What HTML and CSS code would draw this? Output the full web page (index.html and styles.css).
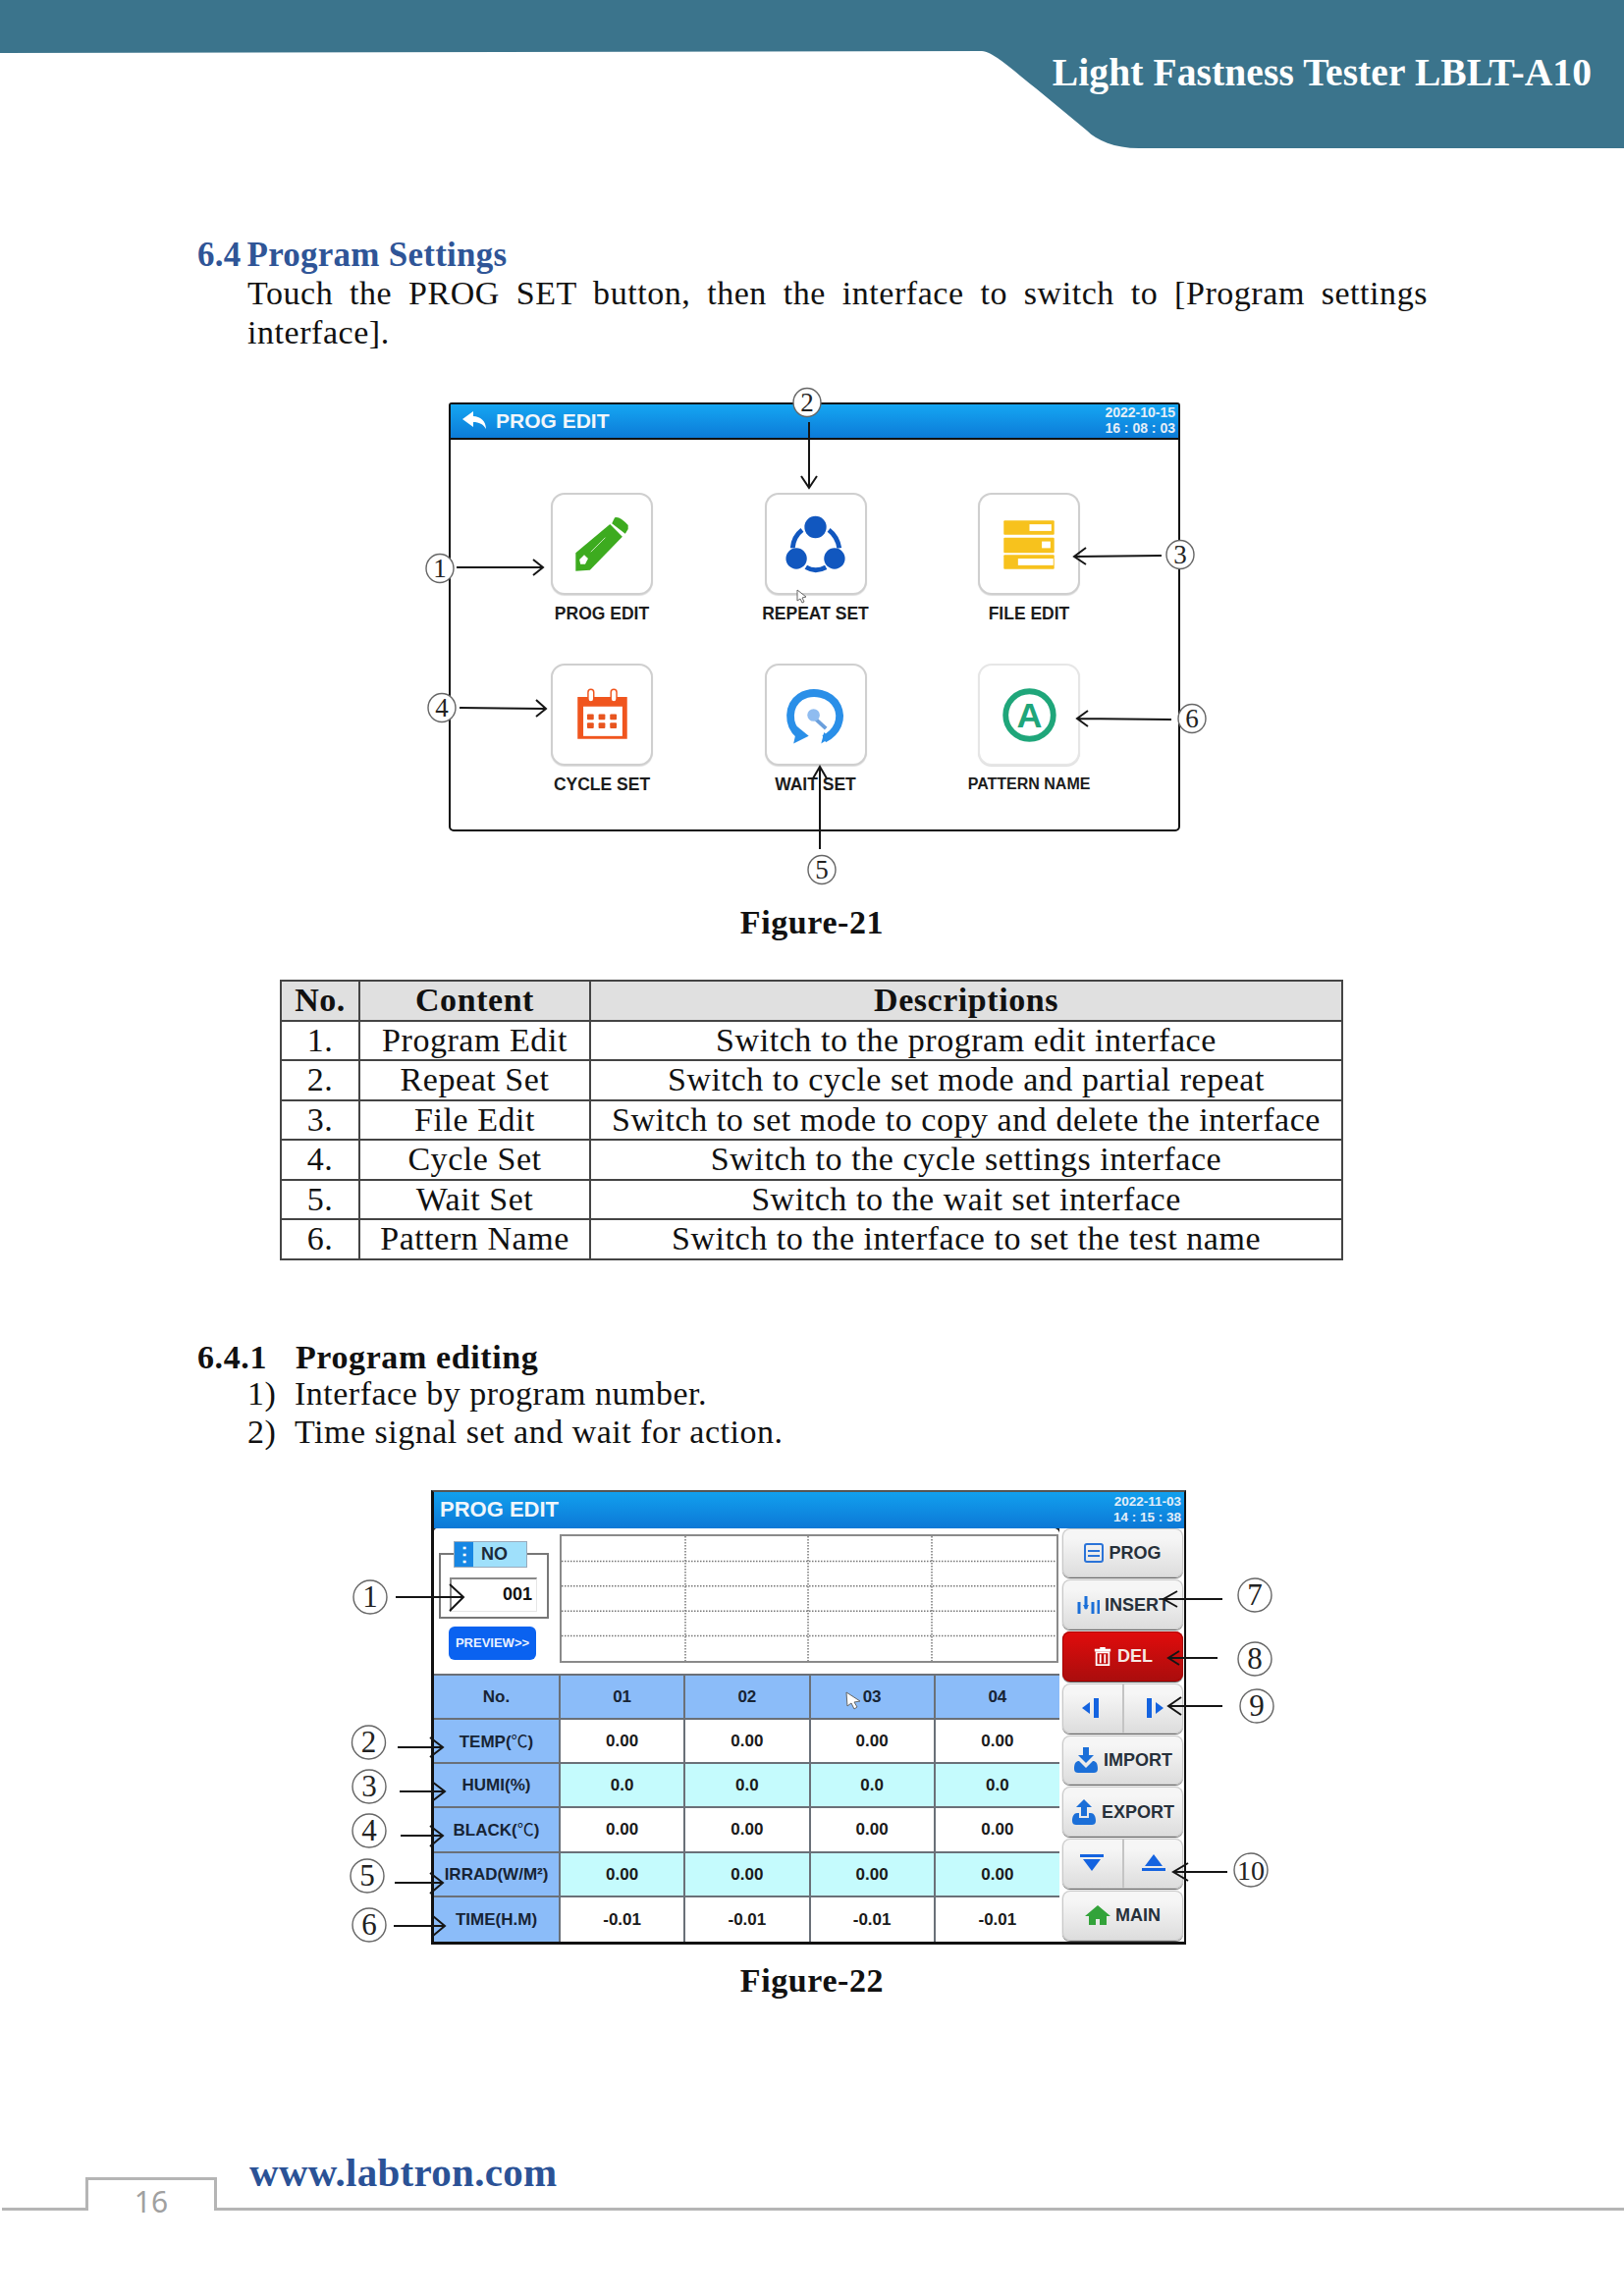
FILE: index.html
```html
<!DOCTYPE html>
<html lang="en">
<head>
<meta charset="utf-8">
<title>Light Fastness Tester LBLT-A10</title>
<link rel="stylesheet" href="styles.css">
</head>
<body>
<div class="page">
  <header class="banner">
    <svg class="banner-shape" viewBox="0 0 1654 152" preserveAspectRatio="none"><path d="M0 0H1654V151H1160C1135 151 1117 143 1107 133L1055 90C1030 70 1012 53 1000 52L0 54Z" fill="#3b748c"/></svg>
    <div class="banner-title">Light Fastness Tester LBLT-A10</div>
  </header>

  <main class="content">
    <h2 class="h-blue"><span class="num">6.4</span>Program Settings</h2>
    <p class="para">Touch the PROG SET button, then the interface to switch to [Program settings interface].</p>

    <figure class="fig fig-one">
      <div class="screen-a">
        <div class="bar-a">
          <svg class="back" viewBox="0 0 24 18"><path d="M0 8 11 0V5C18 5 24 10 24 18 21 13 17 11 11 11V16Z" fill="#fff"/></svg>
          <span class="bar-a-title">PROG EDIT</span>
          <span class="stamp stamp-a">2022-10-15<br>16 : 08 : 03</span>
        </div>
        <div class="tiles">
          <div class="tile-item">
            <div class="tile"><svg viewBox="0 0 103 103"><path d="M24 61 60 31 73 44 39 79 24 80Z" fill="#3dab1f"/><path d="M62 30 65 24Q70 22 79 32L79 36 76 41Z" fill="#3dab1f"/><path d="M28 68 33 63 37 67 34 73 29 73Z" fill="#fff"/><path d="M40 60 55 45" stroke="#cfe9c4" stroke-width="1" fill="none"/></svg></div>
            <div class="tile-label">PROG EDIT</div>
          </div>
          <div class="tile-item">
            <div class="tile"><svg viewBox="0 0 103 103"><g fill="#1157bf"><circle cx="51" cy="34" r="11.5"/><circle cx="31" cy="67" r="11"/><circle cx="71" cy="67" r="11"/></g><g fill="none" stroke="#1157bf" stroke-width="5"><path d="M37 37Q28 44 27 56"/><path d="M65 37Q74 44 76 56"/><path d="M41 76Q51 82 62 76"/></g></svg></div>
            <div class="tile-label">REPEAT SET</div>
          </div>
          <div class="tile-item">
            <div class="tile"><svg viewBox="0 0 103 103"><g fill="#f7c21d"><rect x="25" y="27" width="53" height="15" rx="1"/><rect x="25" y="45" width="53" height="16" rx="1"/><rect x="25" y="63" width="53" height="15" rx="1"/></g><g fill="#fff"><rect x="52" y="31" width="23" height="7"/><rect x="65" y="49" width="9" height="7"/><rect x="40" y="67" width="37" height="7"/></g></svg></div>
            <div class="tile-label">FILE EDIT</div>
          </div>
          <div class="tile-item">
            <div class="tile"><svg viewBox="0 0 103 103"><path d="M26 33H78V77H26Z" fill="#f0551e"/><rect x="32" y="43" width="41" height="31" fill="#fff"/><g fill="#e8551f"><rect x="36" y="51" width="7" height="6" rx="1"/><rect x="48" y="51" width="7" height="6" rx="1"/><rect x="60" y="51" width="7" height="6" rx="1"/><rect x="36" y="60" width="7" height="6" rx="1"/><rect x="48" y="60" width="7" height="6" rx="1"/><rect x="60" y="60" width="7" height="6" rx="1"/></g><g fill="#fff" stroke="#f0551e" stroke-width="1.5"><rect x="37" y="25" width="6" height="13" rx="3"/><rect x="61" y="25" width="6" height="13" rx="3"/></g></svg></div>
            <div class="tile-label">CYCLE SET</div>
          </div>
          <div class="tile-item">
            <div class="tile"><svg viewBox="0 0 103 103"><path d="M34 73C21 62 22 42 35 33 48 25 67 29 74 43 80 56 74 70 60 77" fill="none" stroke="#2a8fe8" stroke-width="8"/><path d="M28 82 32 64 44 74Z" fill="#2a8fe8"/><path d="M57 82 60 70 66 76Z" fill="#2a8fe8"/><path d="M51 56 62 66" stroke="#6a9fdc" stroke-width="4"/><circle cx="49" cy="52" r="6.5" fill="#8fbcf0"/></svg></div>
            <div class="tile-label">WAIT SET</div>
          </div>
          <div class="tile-item">
            <div class="tile tile-soft"><svg viewBox="0 0 103 103"><circle cx="52" cy="52" r="25" fill="none" stroke="#1fa67a" stroke-width="6"/><text x="52" y="65" class="tile-a">A</text></svg></div>
            <div class="tile-label tile-label-sm">PATTERN NAME</div>
          </div>
        </div>
      </div>
      <svg class="marks" viewBox="0 390 1654 520">
        <g class="leader">
          <path d="M465 578H553M543 570 553 578 543 586"/>
          <path d="M824 430V497M816 485 824 497 832 485"/>
          <path d="M1183 566 1094 567M1106 558 1094 567 1106 575"/>
          <path d="M468 721 556 722M546 713 556 722 546 730"/>
          <path d="M835 865V781M828 793 835 781 842 793"/>
          <path d="M1193 733 1097 732M1108 724 1097 732 1108 740"/>
        </g>
        <g class="ring"><ellipse cx="448" cy="579" rx="14" ry="14.500"/><ellipse cx="822" cy="410" rx="14" ry="14.500"/><ellipse cx="1202" cy="565" rx="14" ry="14.500"/><ellipse cx="450" cy="721" rx="14" ry="14.500"/><ellipse cx="837" cy="886" rx="14" ry="14.500"/><ellipse cx="1214" cy="732" rx="14" ry="14.500"/></g>
        <g class="ring-num"><text x="448" y="588">1</text><text x="822" y="419">2</text><text x="1202" y="574">3</text><text x="450" y="730">4</text><text x="837" y="895">5</text><text x="1214" y="741">6</text></g>
        <path class="pointer" d="M812 601 821 608 817 609 819 613 817 614 815 610 812 612Z"/>
      </svg>
    </figure>
    <figcaption class="caption">Figure-21</figcaption>

    <table class="desc">
      <thead><tr><th class="col-no">No.</th><th class="col-content">Content</th><th>Descriptions</th></tr></thead>
      <tbody>
        <tr><td>1.</td><td>Program Edit</td><td>Switch to the program edit interface</td></tr>
        <tr><td>2.</td><td>Repeat Set</td><td>Switch to cycle set mode and partial repeat</td></tr>
        <tr><td>3.</td><td>File Edit</td><td>Switch to set mode to copy and delete the interface</td></tr>
        <tr><td>4.</td><td>Cycle Set</td><td>Switch to the cycle settings interface</td></tr>
        <tr><td>5.</td><td>Wait Set</td><td>Switch to the wait set interface</td></tr>
        <tr><td>6.</td><td>Pattern Name</td><td>Switch to the interface to set the test name</td></tr>
      </tbody>
    </table>

    <h3 class="h-black"><span class="num-wide">6.4.1</span>Program editing</h3>
    <ol class="steps">
      <li><span class="step-n">1)</span>Interface by program number.</li>
      <li><span class="step-n">2)</span>Time signal set and wait for action.</li>
    </ol>

    <figure class="fig fig-two">
      <div class="screen-b">
        <div class="bar-b">
          <span class="bar-b-title">PROG EDIT</span>
          <span class="stamp stamp-b">2022-11-03<br>14 : 15 : 38</span>
        </div>
        <div class="panel">
          <div class="panel-left">
            <div class="panel-top">
              <div class="no-col">
                <div class="no-group">
                  <div class="no-tag"><span class="no-dots">⋮</span><span class="no-text">NO</span></div>
                  <div class="no-input">001</div>
                </div>
                <div class="preview">PREVIEW&gt;&gt;</div>
              </div>
              <svg class="chart" viewBox="0 0 508 130" preserveAspectRatio="none"><g class="chart-grid"><path d="M127 0V130M253 0V130M380 0V130M0 26H508M0 52H508M0 78H508M0 104H508"/></g></svg>
            </div>
            <table class="data">
              <thead><tr><th class="data-head">No.</th><th>01</th><th>02</th><th>03</th><th>04</th></tr></thead>
              <tbody>
                <tr><th>TEMP(<span class="cjk">℃</span>)</th><td>0.00</td><td>0.00</td><td>0.00</td><td>0.00</td></tr>
                <tr class="alt"><th>HUMI(%)</th><td>0.0</td><td>0.0</td><td>0.0</td><td>0.0</td></tr>
                <tr><th>BLACK(<span class="cjk">℃</span>)</th><td>0.00</td><td>0.00</td><td>0.00</td><td>0.00</td></tr>
                <tr class="alt"><th>IRRAD(W/M²)</th><td>0.00</td><td>0.00</td><td>0.00</td><td>0.00</td></tr>
                <tr><th>TIME(H.M)</th><td>-0.01</td><td>-0.01</td><td>-0.01</td><td>-0.01</td></tr>
              </tbody>
            </table>
          </div>
          <div class="side">
            <div class="btn"><svg class="ico" viewBox="0 0 20 20"><rect x="1" y="1" width="18" height="18" rx="2" fill="none" stroke="#2a73d8" stroke-width="2"/><path d="M4 8H16M4 13H16" stroke="#2a73d8" stroke-width="2"/></svg>PROG</div>
            <div class="btn"><svg class="ico ico-w" viewBox="0 0 24 20"><path d="M3 7V19M10 1V14M17 7V19M23 5V19" stroke="#1b6fd8" stroke-width="3"/><path d="M7 10 10 15 13 10Z" fill="#1b6fd8"/></svg>INSERT</div>
            <div class="btn btn-del"><svg class="ico" viewBox="0 0 20 22"><path d="M7 1H13V3H19V6H1V3H7Z" fill="#fff"/><path d="M3 7H17V21H3Z" fill="none" stroke="#fff" stroke-width="2"/><path d="M7.500 9V19M12.500 9V19" stroke="#fff" stroke-width="2"/></svg>DEL</div>
            <div class="btn btn-pair"><span class="half half-left"><svg class="ico" viewBox="0 0 20 20"><path d="M0 10 8 4V16Z" fill="#1463e0"/><rect x="12" y="0" width="5" height="20" fill="#1463e0"/></svg></span><span class="half"><svg class="ico" viewBox="0 0 20 20"><rect x="3" y="0" width="5" height="20" fill="#1463e0"/><path d="M20 10 12 4V16Z" fill="#1463e0"/></svg></span></div>
            <div class="btn"><svg class="ico ico-l" viewBox="0 0 26 26"><path d="M10 0H16V8H21L13 16 5 8H10Z" fill="#1b6fd8"/><path d="M1 22C1 16 3 14 6 14L13 21 20 14C23 14 25 16 25 22 25 25 23 26 21 26H5C3 26 1 25 1 22Z" fill="#1b6fd8"/></svg>IMPORT</div>
            <div class="btn"><svg class="ico ico-l" viewBox="0 0 26 26"><path d="M13 0 21 8H16V17H10V8H5Z" fill="#1b6fd8"/><path d="M1 22C1 17 3 14 6 14H8V19H18V14H20C23 14 25 17 25 22 25 25 23 26 21 26H5C3 26 1 25 1 22Z" fill="#1b6fd8"/></svg>EXPORT</div>
            <div class="btn btn-pair"><span class="half half-left"><svg class="ico ico-w" viewBox="0 0 24 18"><rect x="0" y="0" width="24" height="3" fill="#1463e0"/><path d="M3 5H21L12 17Z" fill="#1463e0"/></svg></span><span class="half"><svg class="ico ico-w" viewBox="0 0 24 18"><path d="M12 0 21 12H3Z" fill="#1463e0"/><rect x="0" y="14" width="24" height="3" fill="#1463e0"/></svg></span></div>
            <div class="btn"><svg class="ico ico-l" viewBox="0 0 26 20"><path d="M13 0 26 11H22V20H15V14H11V20H4V11H0Z" fill="#33a33a"/></svg>MAIN</div>
          </div>
        </div>
      </div>
      <svg class="marks" viewBox="0 1500 1654 500">
        <g class="leader">
          <path d="M403 1627H471M458 1614 472 1627 458 1641"/>
          <path d="M405 1780H451M438 1770 451 1780 438 1790"/>
          <path d="M407 1825H453M440 1815 453 1825 440 1835"/>
          <path d="M408 1870H451M438 1860 451 1870 438 1881"/>
          <path d="M402 1918H451M438 1908 451 1918 438 1929"/>
          <path d="M401 1962H453M441 1952 453 1962 441 1972"/>
          <path d="M1245 1629H1185M1199 1621 1185 1629 1199 1637"/>
          <path d="M1240 1689H1190M1201 1682 1190 1689 1201 1696"/>
          <path d="M1245 1738H1190M1203 1729 1190 1738 1203 1747"/>
          <path d="M1250 1907H1195M1210 1898 1195 1907 1210 1916"/>
        </g>
        <g class="ring"><circle cx="377" cy="1627" r="17"/><circle cx="375.500" cy="1775" r="17"/><circle cx="376" cy="1820" r="17"/><circle cx="376" cy="1865" r="17"/><circle cx="374" cy="1911" r="17"/><circle cx="376" cy="1961" r="17"/><circle cx="1278" cy="1625" r="17"/><circle cx="1278" cy="1690" r="17"/><circle cx="1280" cy="1738" r="17"/><circle cx="1274" cy="1905" r="17"/></g>
        <g class="ring-num ring-num-lg"><text x="377" y="1637">1</text><text x="375.500" y="1785">2</text><text x="376" y="1830">3</text><text x="376" y="1875">4</text><text x="374" y="1921">5</text><text x="376" y="1971">6</text><text x="1278" y="1635">7</text><text x="1278" y="1700">8</text><text x="1280" y="1748">9</text><text x="1274" y="1915" class="ring-ten">10</text></g>
        <path class="pointer" d="M862 1724 876 1733 870 1734 873 1739 870 1741 867 1735 863 1738Z"/>
      </svg>
    </figure>
    <figcaption class="caption caption-two">Figure-22</figcaption>
  </main>

  <footer class="foot">
    <div class="foot-rule foot-rule-start"></div>
    <div class="foot-tab">16</div>
    <div class="foot-rule foot-rule-end"><a class="foot-link">www.labtron.com</a></div>
  </footer>
</div>
</body>
</html>
```

FILE: styles.css
```css
* { box-sizing: border-box; }
html, body { margin: 0; padding: 0; background: #fff; }
body { font-family: "Liberation Serif", "Noto Sans CJK SC", serif; color: #111; }
.page { position: relative; width: 1654px; height: 2339px; overflow: hidden; display: flex; flex-direction: column; }

/* banner */
.banner { position: relative; height: 151px; flex: none; display: flex; justify-content: flex-end; }
.banner-shape { position: absolute; inset: 0; width: 100%; height: 152px; }
.banner-title { position: relative; margin: 50px 33px 0 0; font-size: 39.500px; line-height: 48px; font-weight: 700; color: #fff; letter-spacing: .1px; }

/* text */
.content { flex: none; height: 2067px; display: flex; flex-direction: column; }
.h-blue { margin: 89px 200px 0 201px; height: 39px; font-size: 35px; line-height: 40px; font-weight: 700; color: #2f5597; letter-spacing: .25px; }
.num { margin-right: 6px; }
.para { margin: 0 200px 0 252px; font-size: 34px; line-height: 40px; text-align: justify; letter-spacing: .55px; }
.fig { position: relative; margin: 0; }
.fig-one { margin-top: 51px; height: 437px; }
.marks { position: absolute; left: 0; width: 1654px; overflow: visible; pointer-events: none; }
.fig-one .marks { top: -20px; height: 520px; }
.fig-two .marks { top: -18px; height: 500px; }
.leader path { fill: none; stroke: #151515; stroke-width: 2; }
.ring ellipse, .ring circle { fill: #fff; stroke: #666; stroke-width: 1.400; }
.ring-num text { font-family: "Liberation Serif", serif; font-size: 27px; text-anchor: middle; fill: #222; }
.ring-num-lg text { font-size: 31px; }
.ring-num-lg .ring-ten { font-size: 28px; }
.pointer { fill: #fff; stroke: #666; stroke-width: 1; }
.caption { margin: 73px 0 0; height: 40px; text-align: center; font-size: 34px; line-height: 40px; font-weight: 700; letter-spacing: .6px; }
.caption-two { margin-top: 17px; }

/* figure 21 */
.screen-a { margin-left: 457px; width: 745px; height: 437px; border: 2px solid #111; border-radius: 3px 3px 5px 5px; background: #fff; }
.bar-a { position: relative; height: 36px; display: flex; align-items: center; padding: 0 0 2px 12px; border-bottom: 2px solid #111; background: linear-gradient(#15a6f2, #0c7bd8); color: #fff; }
.back { width: 24px; height: 18px; }
.bar-a-title { margin-left: 10px; font: 700 21px/1 "Liberation Sans", sans-serif; color: #f2f6fa; }
.stamp { margin-left: auto; margin-right: 3px; text-align: right; font-family: "Liberation Sans", sans-serif; font-weight: 700; color: #e4eef8; }
.stamp-a { font-size: 14px; line-height: 16px; }
.stamp-b { font-size: 13.500px; line-height: 16px; }
.tiles { display: grid; grid-template-columns: repeat(3, 104px); column-gap: 113.500px; grid-auto-rows: 174px; padding: 54px 0 0 102px; }
.tile-item { display: flex; flex-direction: column; align-items: center; }
.tile { width: 104px; height: 104px; border: 2px solid #cfcfcf; border-radius: 14px; background: #fff; box-shadow: 0 1px 1px #ddd; }
.tile-soft { border-color: #e6e6e6; }
.tile svg { display: block; width: 100px; height: 100px; }
.tile-a { font: 700 37px "Liberation Sans", sans-serif; fill: #1fa67a; text-anchor: middle; }
.tile-label { margin-top: 9px; font: 700 17.500px/20px "Liberation Sans", sans-serif; color: #1c1c1c; white-space: nowrap; }
.tile-label-sm { font-size: 16px; }

/* description table */
.desc { margin: 38px 0 0 285px; width: 1083px; height: 284px; border-collapse: collapse; table-layout: fixed; font-size: 34px; letter-spacing: .55px; }
.desc th, .desc td { border: 2px solid #444; padding: 0; height: 40.500px; line-height: 36px; text-align: center; font-weight: 400; }
.desc th { background: #e0e0e0; font-weight: 700; }
.col-no { width: 80px; }
.col-content { width: 235px; }

.h-black { margin: 79px 0 0 201px; height: 39px; font-size: 34px; line-height: 40px; font-weight: 700; display: flex; letter-spacing: .6px; }
.num-wide { width: 100px; }
.steps { margin: -2px 0 0 252px; padding: 0; list-style: none; font-size: 34px; line-height: 39px; letter-spacing: .5px; }
.steps li { display: flex; }
.step-n { width: 48px; }

/* figure 22 */
.fig-two { margin-top: 40px; height: 463px; }
.screen-b { margin-left: 439px; width: 769px; height: 463px; display: flex; flex-direction: column; border-left: 3px solid #111; border-bottom: 3px solid #111; border-right: 2px solid #111; border-top: 2px solid #555; background: #111; }
.bar-b { height: 37px; display: flex; align-items: center; padding-left: 6px; background: linear-gradient(#12a0ee, #0c78d6); color: #fff; }
.bar-b-title { font: 700 22px/1 "Liberation Sans", sans-serif; color: #f0f6fb; }
.panel { flex: 1; display: flex; min-height: 0; background: #222; }
.panel-left { width: 637px; display: flex; flex-direction: column; background: #fff; border-radius: 4px 6px 0 0; }
.panel-top { height: 148px; display: flex; background: #fff; border-radius: 4px 6px 0 0; }
.no-col { width: 128px; flex: none; padding: 25px 0 0 5px; }
.no-group { position: relative; width: 112px; height: 67px; border: 2px solid #777; background: #fff; }
.no-tag { position: absolute; left: 13px; top: -14px; width: 75px; height: 27px; display: flex; border: 1px solid #9ab; background: #9fe0fb; }
.no-dots { width: 19px; background: #1787e4; color: #fff; font: 700 20px/25px "Liberation Sans", sans-serif; text-align: center; }
.no-text { flex: 1; padding-left: 8px; font: 700 18px/25px "Liberation Sans", sans-serif; color: #1b2a3a; }
.no-input { position: absolute; left: 9px; top: 23px; width: 89px; height: 35px; padding-right: 4px; border-top: 2px solid #888; border-left: 2px solid #888; border-right: 1px solid #e6e6e6; border-bottom: 1px solid #e6e6e6; text-align: right; font: 700 18px/30px "Liberation Sans", sans-serif; color: #111; }
.preview { margin: 8px 0 0 10px; width: 89px; height: 34px; border-radius: 6px; background: #0a62f0; color: #e8f0ff; text-align: center; font: 700 13px/33px "Liberation Sans", sans-serif; }
.chart { flex: none; width: 508px; height: 131px; margin-top: 6px; border: 2px solid #8a8a8a; background: #fff; }
.chart-grid path { fill: none; stroke: #777; stroke-width: 1.500; stroke-dasharray: 1.500 1.500; vector-effect: non-scaling-stroke; }

.data { flex: 1; width: 637px; border-collapse: collapse; table-layout: fixed; font: 700 17px/1 "Liberation Sans", "Noto Sans CJK SC", sans-serif; color: #1a1a1a; }
.data th, .data td { border: 2px solid #6a7078; padding: 0; text-align: center; height: 45px; }
.data th { background: #8bbcf9; color: #172435; }
.data td { background: #fff; }
.data .alt td { background: #c5fbfd; }
.data tr > :first-child { border-left: 0; }
.data tr > :last-child { border-right: 0; }
.data tbody tr:last-child > * { border-bottom: 0; }
.data-head { width: 128px; }
.cjk { font-family: "Noto Sans CJK SC", sans-serif; font-weight: 400; }

/* side buttons */
.side { flex: 1; display: flex; flex-direction: column; gap: 2px; padding: 0 1px 1px 3px; background: #fff; }
.btn { flex: 1; display: flex; align-items: center; justify-content: center; gap: 5px; min-height: 0; border-radius: 8px; background: linear-gradient(#f6f6f6 20%, #dcdcdc); box-shadow: inset 0 0 0 1px #c8c8c8, 0 1px 1px #555; font: 700 18px/1 "Liberation Sans", sans-serif; color: #26303a; }
.btn-del { background: linear-gradient(#e10c0c, #a90d0d); color: #f6e9e4; box-shadow: inset 0 0 0 1px #a00, 0 1px 1px #444; }
.btn-pair { gap: 0; align-items: stretch; }
.half { flex: 1; display: flex; align-items: center; justify-content: center; }
.half-left { border-right: 2px solid #c4c4c4; }
.ico { width: 20px; height: 20px; flex: none; }
.ico-w { width: 24px; }
.ico-l { width: 26px; height: 26px; }

/* footer */
.foot { flex: none; height: 121px; display: flex; align-items: flex-start; padding-left: 2px; }
.foot-rule { height: 34px; border-bottom: 3px solid #b5b5b5; }
.foot-rule-start { width: 85px; }
.foot-tab { width: 134px; height: 34px; border: 3px solid #b5b5b5; border-bottom: 0; text-align: center; font: 400 30px/43px "Noto Sans", sans-serif; color: #a0a0a0; }
.foot-rule-end { flex: 1; position: relative; }
.foot-link { position: absolute; left: 33px; bottom: 14px; font-size: 41px; line-height: 44px; font-weight: 700; color: #2b5296; white-space: nowrap; letter-spacing: .3px; }
```
